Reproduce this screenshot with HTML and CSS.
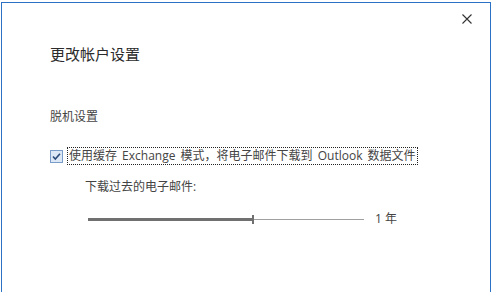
FILE: index.html
```html
<!DOCTYPE html>
<html lang="zh-CN">
<head>
<meta charset="UTF-8">
<meta name="viewport" content="width=device-width, initial-scale=1.0">
<title>更改帐户设置</title>
<link rel="stylesheet" href="styles.css">
</head>
<body>

<div class="dialog">
  <div class="titlebar">
    <button class="close-button" title="关闭">
      <svg width="10" height="10" viewBox="0 0 10 10">
        <path d="M0.5 0.5 L9.5 9.5 M9.5 0.5 L0.5 9.5" stroke="#333" stroke-width="1.1" fill="none"/>
      </svg>
    </button>
  </div>

  <div class="content">
    <h1 class="title">更改帐户设置</h1>

    <div class="section-label">脱机设置</div>

    <label class="check-row">
      <span class="checkbox">
        <svg width="11" height="11" viewBox="0 0 11 11">
          <path d="M2 5.5 L4.3 8 L9 2.8" stroke="#2a4a7a" stroke-width="1.6" fill="none"/>
        </svg>
      </span>
      <span class="check-text">使用缓存 Exchange 模式，将电子邮件下载到 Outlook 数据文件</span>
    </label>

    <div class="sub-options">
      <div class="sub-label">下载过去的电子邮件:</div>
      <div class="slider-row">
        <div class="slider">
          <div class="track-filled"></div>
          <div class="thumb"></div>
          <div class="track-rest"></div>
        </div>
        <span class="slider-value">1 年</span>
      </div>
    </div>
  </div>
</div>

</body>
</html>
```

FILE: styles.css
```css
html, body {
  margin: 0;
  padding: 0;
  background: #fff;
  overflow: hidden;
}

body {
  font-family: "Open Sans", "Noto Sans CJK SC", sans-serif;
  color: #333;
}

.dialog {
  margin: 2px 1px 0 1px;
  height: 300px;
  border-top: 1px solid #2b72c4;
  border-left: 1px solid #2b72c4;
  border-right: 1px solid #2b72c4;
  background: #fff;
}

.titlebar {
  display: flex;
  justify-content: flex-end;
  padding: 10px 17px 0 0;
}

.close-button {
  width: 12px;
  height: 12px;
  padding: 1px;
  border: none;
  background: none;
  display: flex;
  align-items: center;
  justify-content: center;
}

.content {
  padding-left: 48px;
}

.title {
  margin: 18px 0 0 0;
  font-size: 15px;
  font-weight: normal;
  line-height: 22px;
  color: #2b2b2b;
}

.section-label {
  margin-top: 43px;
  font-size: 12px;
  line-height: 18px;
  color: #444;
}

.check-row {
  display: flex;
  align-items: center;
  margin-top: 21px;
}

.checkbox {
  width: 11px;
  height: 11px;
  border: 1px solid #7a9cc8;
  background: #dce8f6;
  display: flex;
  align-items: center;
  justify-content: center;
}

.check-text {
  margin-left: 4px;
  padding: 0 1px;
  font-size: 12px;
  line-height: 16px;
  word-spacing: 2px;
  color: #444;
  border: 1px dotted #222;
}

.sub-options {
  padding-left: 35px;
}

.sub-label {
  margin-top: 14px;
  font-size: 12px;
  line-height: 16px;
  color: #444;
}

.slider-row {
  display: flex;
  align-items: center;
  margin-top: 16px;
}

.slider {
  display: flex;
  align-items: center;
  width: 276px;
  height: 10px;
  margin-left: 3px;
}

.track-filled {
  width: 164px;
  height: 3px;
  background: #707070;
}

.thumb {
  width: 2px;
  height: 9px;
  background: #707070;
}

.track-rest {
  flex: 1;
  height: 1px;
  background: #a0a0a0;
}

.slider-value {
  margin-left: 11px;
  font-size: 12px;
  line-height: 16px;
  color: #444;
}
```
